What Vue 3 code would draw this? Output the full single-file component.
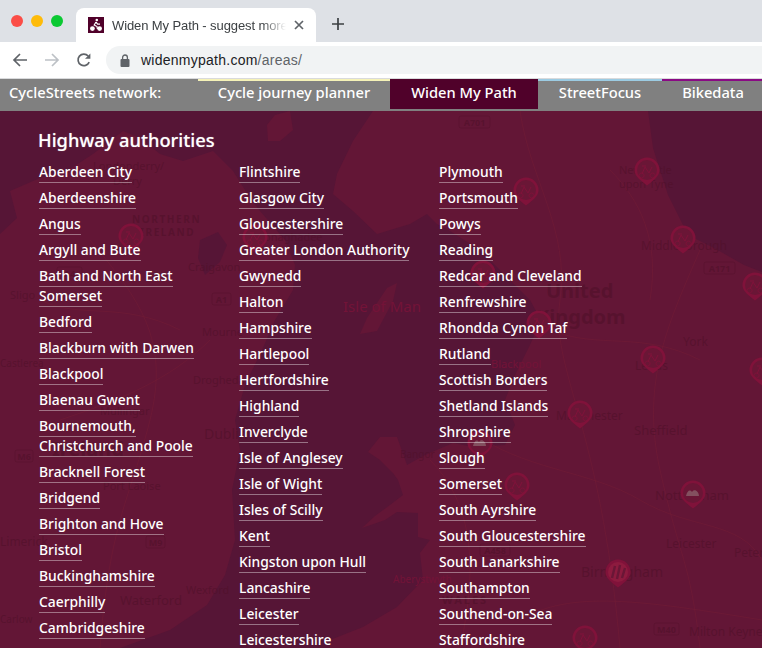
<template>
  <div class="page">
    <div class="tabstrip">
      <div class="lights">
        <span class="light red"></span>
        <span class="light amber"></span>
        <span class="light green"></span>
      </div>
      <div class="tab">
        <span class="favicon">
          <svg width="16" height="16" viewBox="0 0 16 16">
            <rect width="16" height="16" fill="#50012a" />
            <circle cx="4.4" cy="11.6" r="2.4" fill="#fff" />
            <circle cx="11.6" cy="11.6" r="2.4" fill="#fff" />
            <circle cx="8.8" cy="3" r="1.3" fill="#fff" />
            <path d="M8 5 6.2 8 9 9.6 9.4 12M8 5l1.6 2.2H12" fill="none" stroke="#fff" stroke-width="1.2" />
          </svg>
        </span>
        <span class="tab-title">Widen My Path - suggest more</span>
        <svg class="tab-close" width="10" height="10" viewBox="0 0 10 10">
          <path d="M1 1l8 8M9 1 1 9" stroke="#5f6368" stroke-width="1.7" />
        </svg>
      </div>
      <svg class="newtab" width="14" height="14" viewBox="0 0 14 14">
        <path d="M7 1v12M1 7h12" stroke="#3c4043" stroke-width="1.7" />
      </svg>
    </div>

    <div class="toolbar">
      <svg width="16" height="16" viewBox="0 0 16 16">
        <path d="M15 8H2M8 2 2 8l6 6" fill="none" stroke="#5f6368" stroke-width="1.7" />
      </svg>
      <svg width="16" height="16" viewBox="0 0 16 16">
        <path d="M1 8h13M8 2l6 6-6 6" fill="none" stroke="#bdc1c6" stroke-width="1.7" />
      </svg>
      <svg width="16" height="16" viewBox="0 0 16 16">
        <path d="M13.2 10.2A5.8 5.8 0 1 1 12.2 4" fill="none" stroke="#5f6368" stroke-width="1.7" />
        <path d="M14.4 1.4v5.4H9z" fill="#5f6368" />
      </svg>
      <div class="omnibox">
        <svg width="10" height="13" viewBox="0 0 10 13">
          <rect x="0.5" y="5" width="9" height="8" rx="1" fill="#5f6368" />
          <path d="M2.6 5.5V3.4a2.4 2.4 0 0 1 4.8 0v2.1" fill="none" stroke="#5f6368" stroke-width="1.3" />
        </svg>
        <span class="url">widenmypath.com<span class="url-path">/areas/</span></span>
      </div>
    </div>

    <nav class="network">
      <span class="network-label">CycleStreets network:</span>
      <a
        v-for="item in networkLinks"
        :key="item.label"
        class="network-link"
        :class="{ active: item.active }"
        :style="{ width: item.width + 'px', borderTopColor: item.strip }"
      >{{ item.label }}</a>
    </nav>

    <main class="content">
      <svg class="map" width="762" height="537" viewBox="0 111 762 537">
        <rect x="0" y="111" width="762" height="537" fill="#561536" />
        <g fill="#631636">
          <path v-for="(d, i) in landShapes" :key="i" :d="d" />
        </g>
        <path d="M200 240 218 232 227 245 220 262 205 275 198 258z" fill="#561536" />
        <g fill="none" stroke="#7a2036" stroke-width="0.6" opacity="0.6">
          <path v-for="(d, i) in roads" :key="i" :d="d" />
        </g>
        <g class="map-labels">
          <text
            v-for="t in mapLabels"
            :key="t.text + t.x"
            :class="{ sea: t.sea }"
            :x="t.x"
            :y="t.y"
            :font-size="t.size || 12"
            :font-weight="t.bold ? 700 : 400"
            :letter-spacing="t.spacing || 0"
          >{{ t.text }}</text>
        </g>
        <g v-for="b in roadBadges" :key="b.text">
          <rect :x="b.x" :y="b.y" :width="b.w" height="12" rx="2" fill="none" stroke="#4f1029" stroke-opacity="0.4" />
          <text class="badge-text" :x="b.x + b.w / 2" :y="b.y + 9.5" text-anchor="middle">{{ b.text }}</text>
        </g>
        <g v-for="(p, i) in pins" :key="i" :transform="`translate(${p[0]} ${p[1]})`">
          <path d="M0 15.5C-7 10-12.5 6-12.5 0a12.5 12.5 0 0 1 25 0C12.5 6 7 10 0 15.5z" fill="#80123a" />
          <circle r="10" :fill="p[2] === 'stripes' ? '#8d1b3f' : '#6a1636'" />
          <path v-if="!p[2]" d="M-5.5 3a2.5 2.5 0 1 0 .1 0M5.5 3a2.5 2.5 0 1 0 .1 0M-5 4l3-7 4 6 3-6M-5-4h4" fill="none" stroke="#80123a" stroke-width="1" />
          <path v-else-if="p[2] === 'stripes'" d="M-6 6-3-6M-1 7 2-7M4 6 7-4" stroke="#6a1636" stroke-width="2.4" />
          <path v-else d="M-7 3c1-5 4-7 6-4 2-4 7-1 7 4z" fill="#83505f" />
        </g>
      </svg>

      <div class="authorities">
        <h1>Highway authorities</h1>
        <div class="columns">
          <ul v-for="(col, i) in columns" :key="i">
            <li v-for="name in col" :key="name"><a>{{ name }}</a></li>
          </ul>
        </div>
      </div>
    </main>
  </div>
</template>

<script setup>
const networkLinks = [
  { label: 'Cycle journey planner', width: 192, strip: '#f5f2b8' },
  { label: 'Widen My Path', width: 148, strip: '#50012a', active: true },
  { label: 'StreetFocus', width: 124, strip: '#9ccbe2' },
  { label: 'Bikedata', width: 102, strip: '#8a0a84' },
]

const columns = [
  ['Aberdeen City', 'Aberdeenshire', 'Angus', 'Argyll and Bute', 'Bath and North East Somerset', 'Bedford', 'Blackburn with Darwen', 'Blackpool', 'Blaenau Gwent', 'Bournemouth, Christchurch and Poole', 'Bracknell Forest', 'Bridgend', 'Brighton and Hove', 'Bristol', 'Buckinghamshire', 'Caerphilly', 'Cambridgeshire'],
  ['Flintshire', 'Glasgow City', 'Gloucestershire', 'Greater London Authority', 'Gwynedd', 'Halton', 'Hampshire', 'Hartlepool', 'Hertfordshire', 'Highland', 'Inverclyde', 'Isle of Anglesey', 'Isle of Wight', 'Isles of Scilly', 'Kent', 'Kingston upon Hull', 'Lancashire', 'Leicester', 'Leicestershire'],
  ['Plymouth', 'Portsmouth', 'Powys', 'Reading', 'Redcar and Cleveland', 'Renfrewshire', 'Rhondda Cynon Taf', 'Rutland', 'Scottish Borders', 'Shetland Islands', 'Shropshire', 'Slough', 'Somerset', 'South Ayrshire', 'South Gloucestershire', 'South Lanarkshire', 'Southampton', 'Southend-on-Sea', 'Staffordshire'],
]

// rough coastlines, page coordinates
const landShapes = [
  // Ireland
  'M0 234 17 218 10 191 40 178 67 171 93 154 123 131 140 138 160 154 183 161 213 151 233 171 250 198 260 211 285 240 295 265 293 290 275 320 262 350 245 385 235 420 240 450 232 490 235 540 225 575 207 605 170 630 120 648 0 648z',
  // Great Britain
  'M373 111 648 111 653 148 668 195 688 235 714 248 744 265 762 272 762 648 330 648 330 640 363 627 397 607 423 580 420 553 430 540 418 537 418 513 397 512 385 520 362 528 375 516 390 505 403 495 398 480 393 473 380 460 368 452 380 437 397 437 407 465 425 455 453 443 473 447 505 445 515 425 505 400 515 375 530 345 541 320 530 300 500 270 480 250 450 231 437 224 427 214 410 224 377 234 353 211 333 194 337 174 353 141z',
  // Isle of Man
  'M387 288 397 283 393 301 377 331 360 334 367 318z',
  // Arran and Kintyre
  'M267 125 275 115 290 111 293 130 280 141 268 141z',
]

const roads = [
  'M520 111 C530 180 570 230 560 300 S600 420 620 648',
  'M700 250 C670 320 640 380 660 470 S690 560 700 648',
  'M90 240 C140 300 170 340 150 420 S110 520 100 648',
  'M470 430 C520 470 590 470 640 500 S740 520 762 560',
  'M550 330 C600 350 640 330 700 360',
  'M210 340 C170 380 120 400 60 420',
  'M430 460 C470 500 480 560 460 648',
  'M610 170 C640 200 660 240 650 300',
  'M40 300 C80 320 120 300 180 330',
  'M520 620 C570 590 640 600 762 620',
]

const mapLabels = [
  { text: 'Londonderry/', x: 93, y: 170, size: 11 },
  { text: 'Derry', x: 113, y: 185, size: 11 },
  { text: 'NORTHERN', x: 132, y: 223, size: 10, bold: true, spacing: 1.6 },
  { text: 'IRELAND', x: 140, y: 236, size: 10, bold: true, spacing: 1.6 },
  { text: 'Donaghadee', x: 256, y: 241, size: 11 },
  { text: 'Craigavon', x: 188, y: 271, size: 11 },
  { text: 'Sligo', x: 10, y: 299, size: 11 },
  { text: 'Mourne', x: 202, y: 336, size: 11 },
  { text: 'Isle of Man', x: 343, y: 312, size: 15, sea: true },
  { text: 'Drogheda', x: 193, y: 384, size: 11 },
  { text: 'Castlerea', x: 0, y: 367, size: 10 },
  { text: 'Mullingar', x: 100, y: 415, size: 11 },
  { text: 'Dublin', x: 204, y: 439, size: 14 },
  { text: 'Ireland', x: 52, y: 456, size: 20, bold: true },
  { text: 'Port Laoise', x: 103, y: 490, size: 11 },
  { text: 'Limerick', x: 0, y: 546, size: 12 },
  { text: 'Waterford', x: 120, y: 605, size: 13 },
  { text: 'Wexford', x: 186, y: 594, size: 11 },
  { text: 'Carlow', x: 0, y: 623, size: 10 },
  { text: 'United', x: 546, y: 298, size: 20, bold: true },
  { text: 'Kingdom', x: 536, y: 324, size: 20, bold: true },
  { text: 'Blackpool', x: 491, y: 368, size: 11, sea: true },
  { text: 'Newcastle', x: 619, y: 174, size: 11 },
  { text: 'upon Tyne', x: 619, y: 188, size: 11 },
  { text: 'Middlesbrough', x: 641, y: 250, size: 12 },
  { text: 'York', x: 683, y: 346, size: 12 },
  { text: 'Leeds', x: 635, y: 370, size: 12 },
  { text: 'Manchester', x: 556, y: 420, size: 12 },
  { text: 'Sheffield', x: 634, y: 435, size: 13 },
  { text: 'Bangor', x: 400, y: 458, size: 10 },
  { text: 'Nottingham', x: 655, y: 500, size: 13 },
  { text: 'Leicester', x: 666, y: 548, size: 12 },
  { text: 'Birmingham', x: 581, y: 577, size: 14 },
  { text: 'Peterb', x: 734, y: 557, size: 12 },
  { text: 'Aberystwyth', x: 393, y: 583, size: 10, sea: true },
  { text: 'WALES', x: 442, y: 604, size: 11, bold: true, spacing: 2 },
  { text: 'Milton Keynes', x: 689, y: 636, size: 12 },
]

const roadBadges = [
  { text: 'A701', x: 459, y: 116, w: 31 },
  { text: 'A171', x: 704, y: 262, w: 31 },
  { text: 'A1', x: 212, y: 293, w: 19 },
  { text: 'A4', x: 57, y: 267, w: 25 },
  { text: 'M6', x: 15, y: 450, w: 18 },
  { text: 'M9', x: 146, y: 536, w: 19 },
  { text: 'A458', x: 480, y: 544, w: 30 },
  { text: 'M40', x: 654, y: 623, w: 25 },
]

const pins = [
  [647, 170], [526, 190], [683, 238], [131, 236], [255, 237], [483, 273],
  [539, 323], [653, 358], [755, 285], [762, 370], [580, 413], [480, 443, 'bike'],
  [517, 485], [693, 493, 'bike'], [618, 572, 'stripes'], [585, 638],
]
</script>

<style scoped>
.page {
  width: 762px;
  height: 648px;
  overflow: hidden;
  background: #fff;
  font-family: "Noto Sans", "Open Sans", sans-serif;
}

.tabstrip {
  height: 42px;
  background: #dee1e6;
  display: flex;
  align-items: flex-end;
}

.lights {
  display: flex;
  gap: 8px;
  width: 76px;
  padding: 0 0 15px 11px;
  box-sizing: border-box;
}

.light {
  width: 12px;
  height: 12px;
  border-radius: 50%;
}
.red { background: #fb4d47; }
.amber { background: #febb0a; }
.green { background: #0bc933; }

.tab {
  width: 240px;
  height: 34px;
  background: #fff;
  border-radius: 8px 8px 0 0;
  display: flex;
  align-items: center;
  padding: 0 12px;
  box-sizing: border-box;
}

.favicon {
  display: flex;
  margin-right: 8px;
}

.tab-title {
  flex: 1;
  overflow: hidden;
  white-space: nowrap;
  font: 13px "Liberation Sans", Arial, sans-serif;
  letter-spacing: -0.1px;
  color: #3c4043;
  -webkit-mask-image: linear-gradient(to right, #000 86%, transparent);
  mask-image: linear-gradient(to right, #000 86%, transparent);
}

.tab-close {
  margin-left: 8px;
}

.newtab {
  margin: 0 0 11px 15px;
}

.toolbar {
  height: 36px;
  background: #fff;
  display: flex;
  align-items: center;
  gap: 16px;
  padding: 0 0 0 12px;
  border-bottom: 1px solid #d9dadc;
}

.omnibox {
  flex: 1;
  height: 28px;
  background: #f1f3f4;
  border-radius: 14px 0 0 14px;
  display: flex;
  align-items: center;
  gap: 11px;
  padding-left: 14px;
  margin-left: -2px;
}

.url {
  font: 14px "Liberation Sans", Arial, sans-serif;
  letter-spacing: 0.25px;
  color: #202124;
}

.url-path {
  color: #5f6368;
}

.network {
  height: 32px;
  background: #808080;
  display: flex;
  overflow: hidden;
  color: #fff;
  font-size: 14.7px;
  font-weight: 500;
}

.network-label {
  flex: none;
  width: 198px;
  padding: 3px 0 0 9px;
  box-sizing: border-box;
  line-height: 20px;
}

.network-link {
  flex: none;
  border-top: 2px solid transparent;
  height: 30px;
  line-height: 20px;
  padding-top: 1px;
  box-sizing: border-box;
  text-align: center;
}

.network-link.active {
  background: #50012a;
}

.content {
  position: relative;
  height: 537px;
  overflow: hidden;
}

.map {
  position: absolute;
  inset: 0;
}

.map-labels text {
  fill: #4f1029;
  fill-opacity: 0.6;
  font-family: "Noto Sans", sans-serif;
}

.map-labels text.sea {
  fill: #731338;
  fill-opacity: 1;
}

.badge-text {
  fill: #4f1029;
  fill-opacity: 0.6;
  font-size: 9px;
  font-weight: 700;
  font-family: "Noto Sans", sans-serif;
}

.authorities {
  position: relative;
  padding: 16px 0 0 39px;
  color: #fff;
}

h1 {
  margin: 0 0 9px -1px;
  font-size: 18.3px;
  line-height: 26px;
  font-weight: 500;
  text-shadow: 0 0 1px rgba(255, 255, 255, 0.5);
}

.columns {
  display: flex;
}

ul {
  list-style: none;
  margin: 0;
  padding: 0;
  width: 200px;
  flex: none;
}

li {
  width: 178px;
  margin-bottom: 6px;
  font-size: 13.85px;
  line-height: 20px;
  font-weight: 500;
}

li a {
  border-bottom: 1px solid rgba(255, 255, 255, 0.4);
  padding-bottom: 1px;
}
</style>

<style>
html, body {
  margin: 0;
  background: #fff;
}
</style>
